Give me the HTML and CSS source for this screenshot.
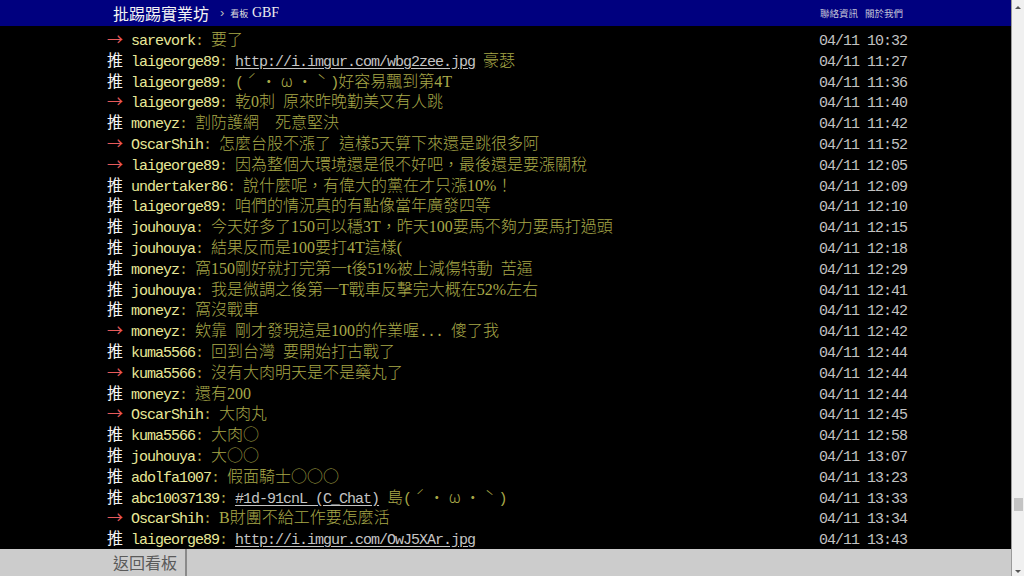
FILE: index.html
```html
<!DOCTYPE html>
<html lang="zh-Hant">
<head>
<meta charset="UTF-8">
<title>批踢踢實業坊 › 看板 GBF</title>
<link rel="stylesheet" href="styles.css">
</head>
<body>
<div class="page">
  <div class="main">
    <div class="topbar">
      <div class="inner">
        <a class="site" href="#">批踢踢實業坊</a>
        <span class="sep">›</span>
        <a class="board" href="#"><span class="lbl">看板</span> GBF</a>
        <span class="links"><a href="#">聯絡資訊</a><a href="#">關於我們</a></span>
      </div>
    </div>

    <div class="screen">
      <div class="pushes">
        <div class="push"><span class="tag arrow">→</span><span class="uid m">sarevork</span><span class="txt"><span class="m">: </span>要了</span><span class="time m">04/11 10:32</span></div>
        <div class="push"><span class="tag">推</span><span class="uid m">laigeorge89</span><span class="txt"><span class="m">: </span><a class="m" href="#">http://i.imgur.com/wbg2zee.jpg</a><span class="m"> </span>豪瑟</span><span class="time m">04/11 11:27</span></div>
        <div class="push"><span class="tag">推</span><span class="uid m">laigeorge89</span><span class="txt"><span class="m">: (</span><span class="kao">ˊ・ω・ˋ</span><span class="m">)</span>好容易飄到第4T</span><span class="time m">04/11 11:36</span></div>
        <div class="push"><span class="tag arrow">→</span><span class="uid m">laigeorge89</span><span class="txt"><span class="m">: </span>乾0刺<span class="m"> </span>原來昨晚勤美又有人跳</span><span class="time m">04/11 11:40</span></div>
        <div class="push"><span class="tag">推</span><span class="uid m">moneyz</span><span class="txt"><span class="m">: </span>割防護網　死意堅決</span><span class="time m">04/11 11:42</span></div>
        <div class="push"><span class="tag arrow">→</span><span class="uid m">OscarShih</span><span class="txt"><span class="m">: </span>怎麼台股不漲了<span class="m"> </span>這樣5天算下來還是跳很多阿</span><span class="time m">04/11 11:52</span></div>
        <div class="push"><span class="tag arrow">→</span><span class="uid m">laigeorge89</span><span class="txt"><span class="m">: </span>因為整個大環境還是很不好吧，最後還是要漲關稅</span><span class="time m">04/11 12:05</span></div>
        <div class="push"><span class="tag">推</span><span class="uid m">undertaker86</span><span class="txt"><span class="m">: </span>說什麼呢，有偉大的黨在才只漲10%！</span><span class="time m">04/11 12:09</span></div>
        <div class="push"><span class="tag">推</span><span class="uid m">laigeorge89</span><span class="txt"><span class="m">: </span>咱們的情況真的有點像當年廣發四等</span><span class="time m">04/11 12:10</span></div>
        <div class="push"><span class="tag">推</span><span class="uid m">jouhouya</span><span class="txt"><span class="m">: </span>今天好多了150可以穩3T，昨天100要馬不夠力要馬打過頭</span><span class="time m">04/11 12:15</span></div>
        <div class="push"><span class="tag">推</span><span class="uid m">jouhouya</span><span class="txt"><span class="m">: </span>結果反而是100要打4T這樣(</span><span class="time m">04/11 12:18</span></div>
        <div class="push"><span class="tag">推</span><span class="uid m">moneyz</span><span class="txt"><span class="m">: </span>窩150剛好就打完第一t後51%被上減傷特動<span class="m"> </span>苦逼</span><span class="time m">04/11 12:29</span></div>
        <div class="push"><span class="tag">推</span><span class="uid m">jouhouya</span><span class="txt"><span class="m">: </span>我是微調之後第一T戰車反擊完大概在52%左右</span><span class="time m">04/11 12:41</span></div>
        <div class="push"><span class="tag">推</span><span class="uid m">moneyz</span><span class="txt"><span class="m">: </span>窩沒戰車</span><span class="time m">04/11 12:42</span></div>
        <div class="push"><span class="tag arrow">→</span><span class="uid m">moneyz</span><span class="txt"><span class="m">: </span>欸靠<span class="m"> </span>剛才發現這是100的作業喔<span class="m">... </span>傻了我</span><span class="time m">04/11 12:42</span></div>
        <div class="push"><span class="tag">推</span><span class="uid m">kuma5566</span><span class="txt"><span class="m">: </span>回到台灣<span class="m"> </span>要開始打古戰了</span><span class="time m">04/11 12:44</span></div>
        <div class="push"><span class="tag arrow">→</span><span class="uid m">kuma5566</span><span class="txt"><span class="m">: </span>沒有大肉明天是不是藥丸了</span><span class="time m">04/11 12:44</span></div>
        <div class="push"><span class="tag">推</span><span class="uid m">moneyz</span><span class="txt"><span class="m">: </span>還有200</span><span class="time m">04/11 12:44</span></div>
        <div class="push"><span class="tag arrow">→</span><span class="uid m">OscarShih</span><span class="txt"><span class="m">: </span>大肉丸</span><span class="time m">04/11 12:45</span></div>
        <div class="push"><span class="tag">推</span><span class="uid m">kuma5566</span><span class="txt"><span class="m">: </span><span class="w">大肉○</span></span><span class="time m">04/11 12:58</span></div>
        <div class="push"><span class="tag">推</span><span class="uid m">jouhouya</span><span class="txt"><span class="m">: </span><span class="w">大○○</span></span><span class="time m">04/11 13:07</span></div>
        <div class="push"><span class="tag">推</span><span class="uid m">adolfa1007</span><span class="txt"><span class="m">: </span><span class="w">假面騎士○○○</span></span><span class="time m">04/11 13:23</span></div>
        <div class="push"><span class="tag">推</span><span class="uid m">abc10037139</span><span class="txt"><span class="m">: </span><a class="m" href="#">#1d-91cnL (C_Chat)</a><span class="m"> </span>島<span class="m">(</span><span class="kao">ˊ・ω・ˋ</span><span class="m">)</span></span><span class="time m">04/11 13:33</span></div>
        <div class="push"><span class="tag arrow">→</span><span class="uid m">OscarShih</span><span class="txt"><span class="m">: </span>B財團不給工作要怎麼活</span><span class="time m">04/11 13:34</span></div>
        <div class="push"><span class="tag">推</span><span class="uid m">laigeorge89</span><span class="txt"><span class="m">: </span><a class="m" href="#">http://i.imgur.com/OwJ5XAr.jpg</a></span><span class="time m">04/11 13:43</span></div>
      </div>
    </div>

    <div class="bottombar">
      <div class="inner">
        <a class="back" href="#">返回看板</a>
      </div>
    </div>
  </div>

  <!-- fake scrollbar -->
  <div class="scrollbar">
    <span class="up"></span>
    <span class="track"><span class="thumb"></span></span>
    <span class="down"></span>
  </div>
</div>
</body>
</html>
```

FILE: styles.css
```css
html,body,div,span,a{margin:0;padding:0;}
a{text-decoration:none;color:inherit;}
body{background:#000;font:16px/1.3 "Liberation Serif","Noto Sans CJK TC",serif;overflow:hidden;}

.page{display:flex;width:1024px;height:576px;}
.main{flex:1;display:flex;flex-direction:column;min-width:0;}

/* top bar */
.topbar{height:26px;background:#00007f;color:#e8e8e8;flex:none;}
.topbar .inner{display:flex;align-items:center;height:26px;width:790px;margin-left:113px;}
.topbar .site{font:16px/26px "Noto Sans CJK TC",sans-serif;color:#f4f4f4;}
.topbar .sep{font:13px/26px "Liberation Sans",sans-serif;color:#bbb;margin:0 6px 0 11px;}
.topbar .board{font:14px/26px "Liberation Serif",serif;color:#eee;}
.topbar .board .lbl{font:9px/26px "Noto Sans CJK TC",sans-serif;color:#ddd;}
.topbar .links{margin-left:auto;display:flex;gap:7px;}
.topbar .links a{font:9.5px/26px "Noto Sans CJK TC",sans-serif;color:#c4c4d8;}

/* push list */
.screen{flex:1;background:#000;overflow:hidden;}
.pushes{width:800px;margin-left:107px;padding-top:2px;}
.push{display:flex;align-items:baseline;height:20.8px;line-height:20.8px;white-space:pre;}
.m{font-family:"Liberation Mono",monospace;font-size:15px;letter-spacing:-1px;}
.w{font-family:"Noto Sans CJK TC",sans-serif;}
.kao{font-family:"Noto Sans CJK TC",sans-serif;letter-spacing:4px;padding-left:4px;}
.tag{display:inline-block;width:24px;font-family:"Noto Sans CJK TC",sans-serif;font-size:16px;color:#f4f4f4;}
.tag.arrow{color:#e85a5a;}
.uid{color:#e8e898;}
.txt{color:#a8a848;font-weight:300;}
.txt a{color:#c4c4c4;text-decoration:underline;text-underline-offset:2px;}
.time{margin-left:auto;color:#c2c2c2;}

/* bottom bar */
.bottombar{height:27px;background:#cccccc;flex:none;}
.bottombar .inner{margin-left:107px;height:27px;display:flex;}
.bottombar .back{display:block;padding:0 8px 0 6px;border-right:2px solid #8a8a8a;font:16px/27px "Noto Sans CJK TC",sans-serif;color:#5a5a5a;}

/* scrollbar */
.scrollbar{width:12px;flex:none;background:#f0f0f0;border-left:1px solid #9a9a9a;display:flex;flex-direction:column;align-items:center;}
.scrollbar .up,.scrollbar .down{height:13px;width:0;display:flex;align-items:center;justify-content:center;}
.scrollbar .up::before{content:"";border:3px solid transparent;border-bottom:3px solid #555;border-top:0;margin-top:2px;}
.scrollbar .down::before{content:"";border:3px solid transparent;border-top:3px solid #555;border-bottom:0;margin-top:4px;}
.scrollbar .track{flex:1;width:100%;display:flex;flex-direction:column;justify-content:flex-end;align-items:center;padding-bottom:52px;}
.scrollbar .thumb{width:9px;height:13px;background:#c4c4c4;}
```
